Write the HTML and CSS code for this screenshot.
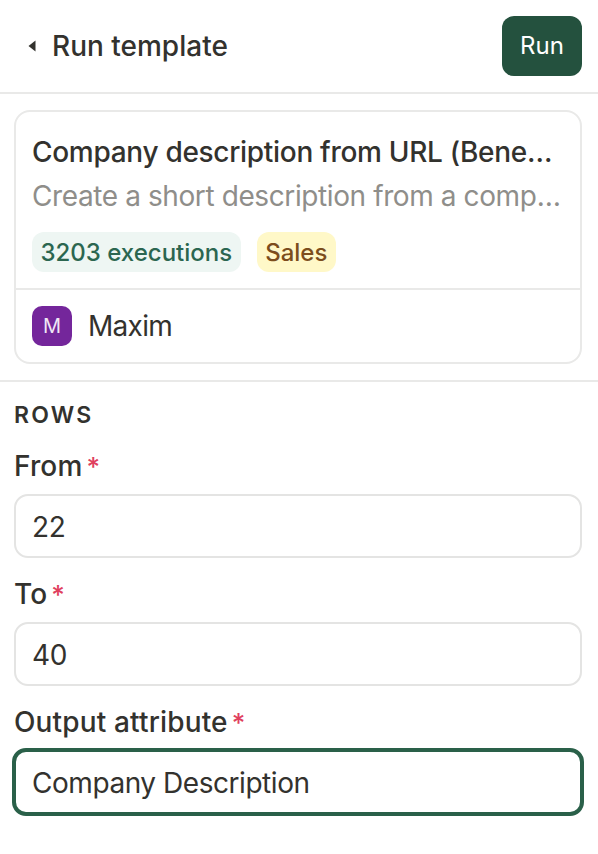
FILE: index.html
```html
<!DOCTYPE html>
<html lang="en">
<head>
<meta charset="utf-8">
<title>Run template</title>
<link rel="stylesheet" href="styles.css">
</head>
<body>
<header class="header">
  <div class="back">
    <svg class="caret" width="8" height="12" viewBox="0 0 8 12"><path d="M7.5 0.5V11.5L0.5 6Z" fill="#33322e"/></svg>
    <h1 class="page-title">Run template</h1>
  </div>
  <button class="run" type="button">Run</button>
</header>
<section class="card-wrap">
  <div class="card">
    <div class="card-body">
      <div class="card-title">Company description from URL (Benefits, Services, Customers)</div>
      <div class="card-desc">Create a short description from a company website URL and its content</div>
      <div class="badges">
        <span class="badge badge-green">3203 executions</span>
        <span class="badge badge-yellow">Sales</span>
      </div>
    </div>
    <div class="card-foot">
      <span class="avatar">M</span>
      <span class="author">Maxim</span>
    </div>
  </div>
</section>
<form class="form">
  <div class="section-label">ROWS</div>
  <label class="field-label" for="from">From<span class="req">*</span></label>
  <input class="input" id="from" value="22">
  <label class="field-label" for="to">To<span class="req">*</span></label>
  <input class="input" id="to" value="40">
  <label class="field-label" for="out">Output attribute<span class="req">*</span></label>
  <input class="input input-focus" id="out" value="Company Description">
</form>
</body>
</html>
```
FILE: styles.css
```css
* { box-sizing: border-box; }
html, body { margin: 0; padding: 0; background: #fff; }
body {
  font-family: Inter, "Liberation Sans", sans-serif;
  color: #33322e;
  width: 598px;
  height: 854px;
  overflow: hidden;
}
.header {
  height: 94px;
  border-bottom: 2px solid #e9e9e8;
  display: flex;
  align-items: center;
  justify-content: space-between;
  padding: 0 16px 0 28px;
}
.back { display: flex; align-items: center; gap: 16px; }
.caret { display: block; }
.page-title { margin: 0; font-size: 28px; line-height: 36px; font-weight: 500; }
.run {
  width: 80px;
  height: 60px;
  border: 0;
  border-radius: 12px;
  background: #24513e;
  color: #fff;
  font: 400 24px/32px Inter, "Liberation Sans", sans-serif;
  padding: 0;
}
.card-wrap {
  padding: 16px 16px 16px 14px;
  border-bottom: 2px solid #e9e9e8;
}
.card {
  border: 2px solid #e9e9e8;
  border-radius: 16px;
  height: 254px;
}
.card-body {
  height: 178px;
  border-bottom: 2px solid #e9e9e8;
  padding: 18px 16px 0;
}
.card-title, .card-desc {
  white-space: nowrap;
  overflow: hidden;
  text-overflow: ellipsis;
  font-size: 28px;
  line-height: 44px;
}
.card-title { font-weight: 550; letter-spacing: -0.3px; margin-right: 8px; }
.card-desc { color: #8f8e8a; letter-spacing: -0.4px; }
.badges { display: flex; gap: 16px; margin-top: 14px; }
.badge {
  height: 40px;
  padding: 1px 8.5px 0;
  border-radius: 12px;
  font-size: 24px;
  line-height: 40px;
  font-weight: 500;
}
.badge-green { background: #eef6f3; color: #2b6650; }
.badge-yellow { background: #fff8c8; color: #7c4d1c; }
.card-foot {
  display: flex;
  align-items: center;
  gap: 16px;
  padding: 16px 16px 0;
}
.avatar {
  width: 40px;
  height: 40px;
  border-radius: 10px;
  background: #74269b;
  color: #f0e6f5;
  font-size: 20px;
  line-height: 40px;
  text-align: center;
}
.author { font-size: 28px; line-height: 40px; letter-spacing: -0.7px; }
.form { display: block; padding: 18px 16px 0 14px; }
.section-label {
  font-size: 23px;
  line-height: 30px;
  font-weight: 600;
  letter-spacing: 2.2px;
}
.field-label {
  display: block;
  font-size: 28px;
  line-height: 36px;
  font-weight: 500;
  letter-spacing: 0.15px;
  margin-top: 18px;
  margin-bottom: 10px;
}
.req {
  color: #e0405e;
  margin-left: 4px;
  font-size: 26px;
  line-height: 1;
}
.input {
  display: block;
  width: 100%;
  height: 64px;
  border: 2px solid #e4e4e3;
  border-radius: 14px;
  background: #fff;
  padding: 2px 16px 0;
  font: 400 28px/36px Inter, "Liberation Sans", sans-serif;
  letter-spacing: -0.45px;
  color: #33322e;
  outline: 0;
}
.input-focus {
  height: 68px;
  width: calc(100% + 4px);
  margin: -2px 0 0 -2px;
  border: 4px solid #2a6049;
  padding: 2px 16px 0;
}
```
